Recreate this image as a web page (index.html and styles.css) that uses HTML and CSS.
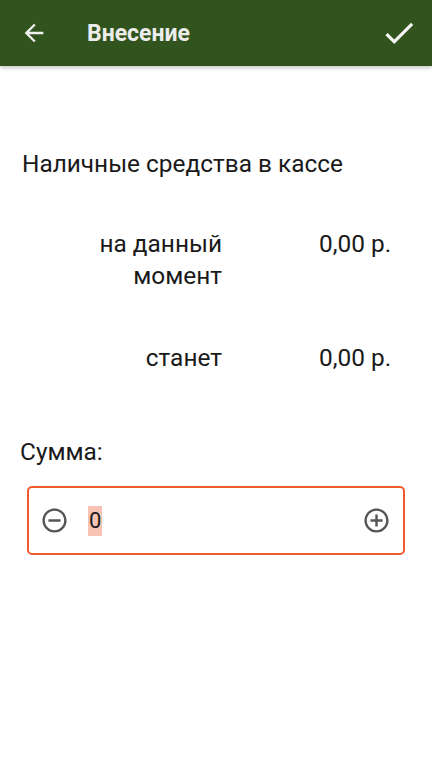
FILE: index.html
```html
<!DOCTYPE html>
<html>
<head>
	<meta charset="utf-8">
	<meta name="viewport" content="width=device-width, initial-scale=1">
	<title>Внесение</title>
	<link rel="stylesheet" href="styles.css">
</head>
<body>
	<div class="toolbar">
		<svg class="back" viewBox="0 0 24 24"><path d="M20 11H7.83l5.59-5.59L12 4l-8 8 8 8 1.41-1.41L7.83 13H20v-2z"/></svg>
		<div class="title">Внесение</div>
		<svg class="done" viewBox="0 0 24 24"><path d="M9 16.17L4.83 12l-1.42 1.41L9 19 21 7l-1.41-1.41z"/></svg>
	</div>
	<div class="main">
		<div class="caption">Наличные средства в кассе</div>
		<div class="row">
			<div class="label">на данный момент</div>
			<div class="value">0,00 р.</div>
		</div>
		<div class="row row2">
			<div class="label">станет</div>
			<div class="value">0,00 р.</div>
		</div>
		<div class="sum-label">Сумма:</div>
		<div class="sum">
			<svg class="btn" viewBox="0 0 24 24"><path d="M7 11v2h10v-2H7zm5-9C6.480 2 2 6.48 2 12s4.48 10 10 10 10-4.48 10-10S17.52 2 12 2zm0 18c-4.41 0-8-3.59-8-8s3.59-8 8-8 8 3.59 8 8-3.590 8-8 8z"/></svg>
			<div class="amount"><span class="sel">0</span></div>
			<svg class="btn" viewBox="0 0 24 24"><path d="M13 7h-2v4H7v2h4v4h2v-4h4v-2h-4V7zm-1-5C6.48 2 2 6.48 2 12s4.48 10 10 10 10-4.48 10-10S17.52 2 12 2zm0 18c-4.41 0-8-3.59-8-8s3.59-8 8-8 8 3.59 8 8-3.59 8-8 8z"/></svg>
		</div>
	</div>
</body>
</html>
```

FILE: styles.css
```css
body{
	margin: 0;
	background: #fff;
	font-family: Roboto, "Noto Sans", sans-serif;
	color: #1a1a1a;
}
.toolbar{
	display: flex;
	align-items: center;
	height: 66px;
	background: #31541e;
	box-shadow: 0 2px 4px rgba(0,0,0,0.22);
}
.back{
	width: 28px;
	height: 28px;
	margin-left: 20px;
	fill: #f0f0f0;
}
.title{
	margin-left: 39px;
	flex: 1;
	font-size: 23px;
	font-weight: 700;
	color: #ececec;
}
.done{
	width: 38px;
	height: 38px;
	margin-right: 14px;
	fill: #f5f5f5;
}
.main{
	padding: 82px 0 0 0;
}
.caption{
	margin-left: 22px;
	font-size: 24.4px;
	line-height: 32px;
}
.row{
	display: flex;
	margin-top: 48px;
	font-size: 24.4px;
	line-height: 32px;
}
.row2{
	margin-top: 50px;
}
.label{
	width: 142px;
	margin-left: 80px;
	text-align: right;
}
.value{
	margin-left: 97px;
}
.sum-label{
	margin: 62px 0 0 20px;
	font-size: 24.4px;
	line-height: 32px;
}
.sum{
	display: flex;
	align-items: center;
	height: 65px;
	margin: 18px 27px 0 27px;
	border: 2px solid #f1592f;
	border-radius: 5px;
	padding: 0 12px 0 11px;
}
.btn{
	width: 29px;
	height: 29px;
	fill: #555;
}
.amount{
	flex: 1;
	margin-left: 19px;
	font-size: 22px;
}
.sel{
	display: inline-block;
	background: #f9c3b4;
	line-height: 30px;
	padding: 0 1px;
}
```
